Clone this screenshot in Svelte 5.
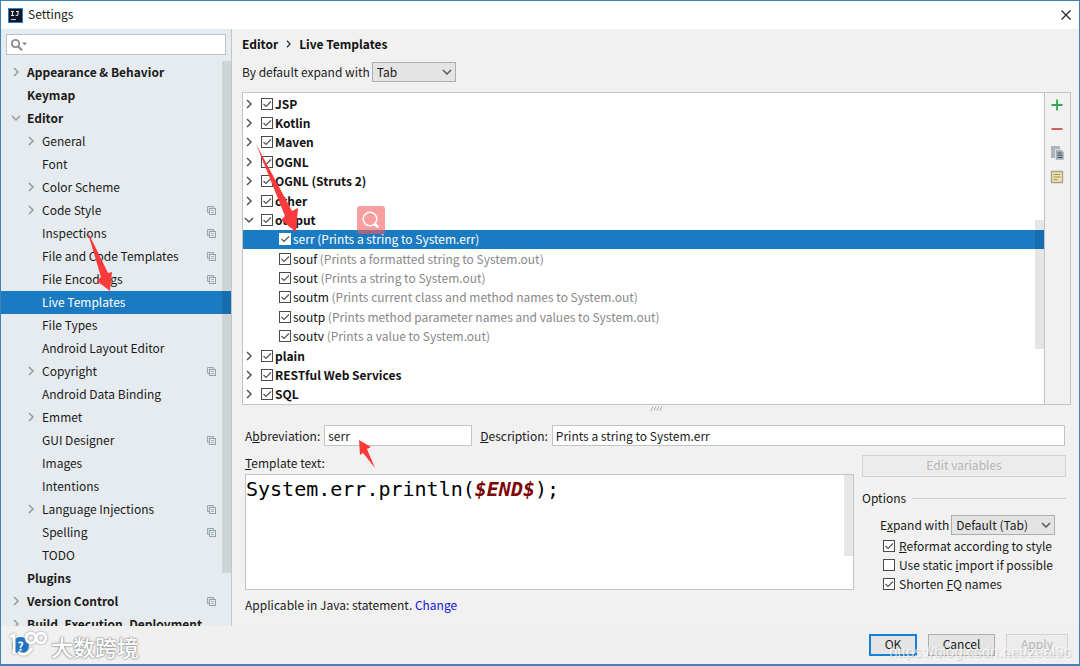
<script lang="ts">
  type Item = { label: string; level: number; arrow?: 'right' | 'down'; bold?: boolean; copy?: boolean; selected?: boolean };
  const settings: Item[] = [
    { label: 'Appearance & Behavior', level: 0, arrow: 'right', bold: true },
    { label: 'Keymap', level: 0, bold: true },
    { label: 'Editor', level: 0, arrow: 'down', bold: true },
    { label: 'General', level: 1, arrow: 'right' },
    { label: 'Font', level: 1 },
    { label: 'Color Scheme', level: 1, arrow: 'right' },
    { label: 'Code Style', level: 1, arrow: 'right', copy: true },
    { label: 'Inspections', level: 1, copy: true },
    { label: 'File and Code Templates', level: 1, copy: true },
    { label: 'File Encodings', level: 1, copy: true },
    { label: 'Live Templates', level: 1, selected: true },
    { label: 'File Types', level: 1 },
    { label: 'Android Layout Editor', level: 1 },
    { label: 'Copyright', level: 1, arrow: 'right', copy: true },
    { label: 'Android Data Binding', level: 1 },
    { label: 'Emmet', level: 1, arrow: 'right' },
    { label: 'GUI Designer', level: 1, copy: true },
    { label: 'Images', level: 1 },
    { label: 'Intentions', level: 1 },
    { label: 'Language Injections', level: 1, arrow: 'right', copy: true },
    { label: 'Spelling', level: 1, copy: true },
    { label: 'TODO', level: 1 },
    { label: 'Plugins', level: 0, bold: true },
    { label: 'Version Control', level: 0, arrow: 'right', bold: true, copy: true },
    { label: 'Build, Execution, Deployment', level: 0, arrow: 'right', bold: true }
  ];

  type Template = { name: string; note?: string; open?: boolean; selected?: boolean };
  const templates: Template[] = [
    { name: 'JSP' },
    { name: 'Kotlin' },
    { name: 'Maven' },
    { name: 'OGNL' },
    { name: 'OGNL (Struts 2)' },
    { name: 'other' },
    { name: 'output', open: true },
    { name: 'serr', note: '(Prints a string to System.err)', selected: true },
    { name: 'souf', note: '(Prints a formatted string to System.out)' },
    { name: 'sout', note: '(Prints a string to System.out)' },
    { name: 'soutm', note: '(Prints current class and method names to System.out)' },
    { name: 'soutp', note: '(Prints method parameter names and values to System.out)' },
    { name: 'soutv', note: '(Prints a value to System.out)' },
    { name: 'plain' },
    { name: 'RESTful Web Services' },
    { name: 'SQL' }
  ];
</script>

{#snippet chevron(dir: string)}
  <svg class="chevron" viewBox="0 0 10 10" width="10" height="10" aria-hidden="true">
    <path d={dir === 'down' ? 'M1 3 L5 7 L9 3' : 'M3 1 L7 5 L3 9'} fill="none" stroke="currentColor" stroke-width="1.5" />
  </svg>
{/snippet}

<div class="window">
  <header class="titlebar">
    <svg width="15" height="15" viewBox="0 0 15 15" aria-hidden="true">
      <rect width="15" height="15" fill="#2f7fd0" />
      <rect x="1" y="1" width="13" height="13" fill="#111722" />
      <path d="M3 3.5h3M4.5 3.5v4M3 7.5h3M8 3.5h3M10 3.5v3q0 1.2-2.4 1" fill="none" stroke="#e4e8ee" stroke-width="1.1" />
      <path d="M3 11.5h5" stroke="#b9c0c8" stroke-width="1.2" />
    </svg>
    <h1>Settings</h1>
    <button class="close" aria-label="Close">
      <svg width="10" height="10" viewBox="0 0 10 10"><path d="M.5 .5l9 9M9.5 .5l-9 9" stroke="#222" stroke-width="1.2" /></svg>
    </button>
  </header>

  <div class="body">
    <aside>
      <div class="search">
        <svg width="18" height="14" viewBox="0 0 18 14" aria-hidden="true">
          <circle cx="4.5" cy="5.5" r="3.7" fill="none" stroke="#8c8c8c" stroke-width="1.8" />
          <path d="M7 8.2l4 4" stroke="#8c8c8c" stroke-width="2.2" />
          <path d="M11 4.5h5l-2.5 3z" fill="#8c8c8c" />
        </svg>
        <input type="search" aria-label="Search settings" />
      </div>
      <nav>
        <ul>
          {#each settings as item}
            <li class:bold={item.bold} class:selected={item.selected} class:child={item.level === 1}>
              <span class="twist">{#if item.arrow}{@render chevron(item.arrow)}{/if}</span>
              <span class="name">{item.label}</span>
              {#if item.copy}
                <svg class="copy" width="9" height="9" viewBox="0 0 9 9" aria-hidden="true">
                  <path d="M2.5 6.5h-2v-6h6v2" fill="#d3e2ea" stroke="#8fa9b8" />
                  <rect x="2.5" y="2.5" width="6" height="6" fill="#e9edf0" stroke="#96a2aa" />
                  <path d="M4 4.5h3M4 6.5h3" stroke="#a5afb5" />
                </svg>
              {/if}
            </li>
          {/each}
        </ul>
        <span class="thumb"></span>
      </nav>
    </aside>

    <main>
      <h2>Editor
        <svg width="5" height="8" viewBox="0 0 5 8" aria-hidden="true"><path d="M1 .8l3 3.2l-3 3.2" fill="none" stroke="#333" stroke-width="1.3" /></svg>
        Live Templates</h2>
      <div class="expand">
        <label for="default-expand">By default expand with</label>
        <span class="select">
          <select id="default-expand"><option>Tab</option></select>
          {@render chevron('down')}
        </span>
      </div>

      <section class="templates">
        <ul>
          {#each templates as t}
            <li class:leaf={t.note} class:selected={t.selected}>
              {#if !t.note}<span class="twist">{@render chevron(t.open ? 'down' : 'right')}</span>{/if}
              <label><input type="checkbox" checked /><span>{t.name}{#if t.note}&nbsp;<i>{t.note}</i>{/if}</span></label>
            </li>
          {/each}
        </ul>
        <span class="list-thumb"></span>
        <div class="tools">
          <button aria-label="Add"><svg width="14" height="14" viewBox="0 0 14 14"><path d="M7 1.5v11M1.5 7h11" stroke="#2fa84f" stroke-width="1.8" /></svg></button>
          <button aria-label="Remove"><svg width="14" height="14" viewBox="0 0 14 14"><path d="M1.5 7h11" stroke="#cf5148" stroke-width="1.8" /></svg></button>
          <button aria-label="Duplicate"><svg width="14" height="14" viewBox="0 0 14 14"><path d="M1 0h9v3h-5v9h-4z" fill="#a9b4bc" /><path d="M5.5 3.5h6l2.5 2.5v8h-8.5z" fill="#a3afb8" stroke="#f1f1f1" stroke-width=".5" /><path d="M7.5 7h4M7.5 9.2h5M7.5 11.5h5" stroke="#3c464f" stroke-width=".9" /></svg></button>
          <button aria-label="Restore defaults"><svg width="14" height="14" viewBox="0 0 14 14"><path d="M1.5 1.5h11v11h-11z" fill="#efe3ac" stroke="#a9a38c" stroke-width="1.3" /><path d="M3.5 4.5h7M3.5 7h7M3.5 9.5h4" stroke="#968a60" stroke-width=".9" /></svg></button>
        </div>
      </section>

      <div class="grip"><svg width="14" height="5" viewBox="0 0 14 5" aria-hidden="true"><path d="M1 4.5l2-4M4 4.5l2-4M7 4.5l2-4M10 4.5l2-4" stroke="#aaa" /></svg></div>

      <div class="fields">
        <label for="abbr">A<u>b</u>breviation:</label>
        <input id="abbr" class="abbr" type="text" value="serr" />
        <label for="desc"><u>D</u>escription:</label>
        <input id="desc" class="desc" type="text" value="Prints a string to System.err" />
      </div>

      <div class="lower">
        <div class="left">
          <div id="template-label" class="template-label"><u>T</u>emplate text:</div>
          <div class="editor">
            <div class="code" contenteditable="true" role="textbox" tabindex="0" aria-multiline="true" aria-labelledby="template-label">System.err.println(<b>$END$</b>);</div>
            <span class="code-thumb"></span>
          </div>
          <p>Applicable in Java: statement. <a href="#change">Change</a></p>
        </div>
        <div class="right">
          <button class="btn wide" disabled>Edit variables</button>
          <fieldset>
            <legend>Options</legend>
            <div class="expand-with">
              <label for="expand">E<u>x</u>pand with</label>
              <span class="select">
                <select id="expand"><option>Default (Tab)</option></select>
                {@render chevron('down')}
              </span>
            </div>
            <label><input type="checkbox" checked /><span><u>R</u>eformat according to style</span></label>
            <label><input type="checkbox" /><span>Use static <u>i</u>mport if possible</span></label>
            <label><input type="checkbox" checked /><span>Shorten <u>F</u>Q names</span></label>
          </fieldset>
        </div>
      </div>
    </main>
  </div>

  <footer>
    <button class="help" aria-label="Help">?</button>
    <button class="btn primary">OK</button>
    <button class="btn">Cancel</button>
    <button class="btn apply" disabled>Apply</button>
  </footer>

  <svg class="arrows" width="480" height="480" viewBox="0 0 480 480" aria-hidden="true">
    <g fill="#fb3b3b">
      <path d="M256 144L292 211L298 208L296 232L281 220L285 216Z" />
      <path d="M87 230L108 273L112 272L110 291L97 281L101 277Z" />
      <path d="M375 468L363 453L360 455L359 440L371 447L367 449Z" />
    </g>
  </svg>

  <span class="lens">
    <svg width="28" height="28" viewBox="0 0 28 28" aria-hidden="true">
      <circle cx="13" cy="13" r="6.8" fill="none" stroke="#fff" stroke-width="1.5" />
      <path d="M18 18.5l2.5 2" stroke="#fff" stroke-width="2.6" stroke-linecap="round" />
    </svg>
  </span>

  <div class="brand">
    <svg width="42" height="30" viewBox="0 0 42 30" aria-hidden="true">
      <g fill="none" stroke="#fff" stroke-width="2.8">
        <path d="M1 6l4-2v19" />
        <circle cx="22" cy="7" r="4.8" /><circle cx="32" cy="7" r="4.8" />
        <path d="M9 21q8 6 14-4" />
      </g>
    </svg>
    <span>大数跨境</span>
  </div>
  <span class="url">https://blog.csdn.net/zeal9s</span>
</div>

<style>
  :global(body) { margin: 0; }
  * { box-sizing: border-box; }
  .window {
    position: relative; display: flex; flex-direction: column; min-height: 100vh;
    border: 1px solid #4083bc; border-bottom-width: 2px; background: #f1f1f1; color: #1a1a1a;
    font: 12px/16px "Noto Sans CJK SC", "Open Sans", sans-serif;
  }
  button, input, select { font: inherit; color: inherit; }
  ul { list-style: none; margin: 0; padding: 0; }
  .titlebar { display: flex; align-items: center; height: 28px; padding: 0 8px 0 7px; gap: 5px; background: #fff; }
  h1 { flex: 1; margin: 0; padding-bottom: 2px; font-size: 12px; font-weight: 400; }
  .close { display: grid; padding: 0; border: 0; background: none; }
  .body { display: flex; flex: 1; }
  aside { display: flex; flex-direction: column; width: 231px; flex: none; background: #e6ebef; border-right: 1px solid #c3c6c8; }
  .search { display: flex; align-items: center; height: 21px; margin: 5px 5px 6px 5px; padding-left: 4px; background: #fff; border: 1px solid #bfc3c6; }
  .search input { flex: 1; min-width: 0; border: 0; padding: 0; background: none; outline: 0; }
  nav { position: relative; flex: 1 0 564px; height: 564px; overflow: hidden; }
  nav li { display: flex; align-items: center; height: 23px; padding: 0 15px 1px 10px; }
  nav li.child { padding-left: 25px; }
  nav .twist { width: 16px; color: #9a9a9a; flex: none; display: flex; }
  .chevron { display: block; width: 10px; height: 10px; flex: none; }
  nav .name { flex: 1; white-space: nowrap; }
  .bold { font-weight: 700; }
  nav li.selected { background: #1a7bc2; color: #fff; }
  .thumb { position: absolute; top: 0; right: 0; width: 9px; height: 512px; background: rgba(0, 0, 0, .1); }
  main { flex: 1; min-width: 0; display: flex; flex-direction: column; padding: 7px 8px 0 10px; }
  h2 { display: flex; align-items: center; gap: 8px; margin: 0 0 10px; font-size: 12px; line-height: 16px; color: #111; }
  .expand, .expand-with, .fields { display: flex; align-items: center; }
  .expand { gap: 2px; height: 20px; }
  .select { position: relative; display: flex; height: 20px; }
  .select select { appearance: none; width: 84px; padding: 0 4px; border: 1px solid #adadad; border-radius: 0; background: #e4e4e4; }
  .select .chevron { position: absolute; right: 4px; top: 5px; color: #555; pointer-events: none; }
  .templates { position: relative; display: flex; height: 313px; margin-top: 10px; border: 1px solid #c4c4c4; background: #fff; }
  .templates ul { flex: 1; display: grid; grid-auto-rows: 1fr; padding-top: 1px; }
  .templates li { display: flex; align-items: center; padding-left: 1px; font-weight: 700; color: #111; }
  .templates li.leaf { padding-left: 36px; font-weight: 400; }
  .templates .twist { width: 17px; color: #555; }
  label { display: flex; align-items: center; white-space: pre; }
  i { font-style: normal; color: #888; }
  .templates li.selected, .templates li.selected i { color: #fff; }
  .templates li.selected { background: #1a7bc2; }
  input[type='checkbox'] {
    appearance: none; width: 12px; height: 12px; margin: 0 2px 0 0; border: 1px solid #4a4a4a; background: #fff; flex: none;
  }
  input[type='checkbox']:checked {
    background: #fff url("data:image/svg+xml,%3Csvg xmlns='http://www.w3.org/2000/svg' viewBox='0 0 10 10'%3E%3Cpath d='M1.5 5L4 7.5L9 2.5' fill='none' stroke='%23555' stroke-width='1.2'/%3E%3C/svg%3E") center / 10px 10px;
  }
  .selected input[type='checkbox'] { border-color: #fff; }
  .list-thumb { position: absolute; top: 127px; right: 26px; width: 9px; height: 129px; background: rgba(0, 0, 0, .1); }
  .tools { width: 26px; padding: 5px 1px 0 0; border-left: 1px solid #c4c4c4; background: #f1f1f1; display: flex; flex-direction: column; align-items: center; gap: 10px; }
  .tools button { display: grid; padding: 0; border: 0; background: none; }
  .grip { display: flex; justify-content: center; padding-top: 1px; height: 20px; }
  .fields { padding: 0 6px 0 3px; }
  .fields input { height: 21px; padding: 0 3px; border: 1px solid #c4c4c4; background: #fff; min-width: 0; }
  .fields .abbr { width: 148px; margin: 0 8px 0 4px; }
  .fields .desc { flex: 1; margin-left: 4px; }
  .lower { display: flex; gap: 8px; padding: 9px 5px 0 3px; }
  .left { flex: 1; min-width: 0; }
  .template-label { height: 19px; }
  .editor { position: relative; height: 116px; border: 1px solid #c4c4c4; background: #fff; }
  .code { height: 114px; padding: 2px 0 0; color: #000; font: 20px/24px "DejaVu Sans Mono", monospace; outline: 0; }
  .code b { color: #7d0606; font-style: italic; }
  .code-thumb { position: absolute; top: 0; right: 0; width: 9px; height: 81px; background: #e6e6e6; }
  p { margin: 7px 0 0; }
  a { color: #1414d2; text-decoration: none; }
  .right { width: 204px; flex: none; }
  .btn { width: 67px; height: 22px; padding: 0 0 2px; border: 1px solid #adadad; background: #e4e4e4; }
  .btn:disabled { color: #b5b5b5; border-color: #d2d2d2; background: #ececec; }
  .wide { width: 100%; display: block; }
  fieldset { border: 0; margin: 13px 0 0; padding: 0; }
  legend { display: flex; align-items: center; width: 100%; padding: 0; margin-bottom: 9px; gap: 6px; }
  legend::after { content: ''; flex: 1; height: 1px; background: #cfcfcf; }
  .expand-with { gap: 2px; padding-left: 18px; margin-bottom: 1px; }
  .expand-with select { width: 104px; }
  fieldset > label { height: 19px; padding-left: 21px; }
  fieldset > label input[type='checkbox'] { margin-right: 4px; }
  footer { display: flex; align-items: center; gap: 11px; height: 38px; padding: 0 11px; background: #f0f0f0; }
  .primary { width: 48px; border: 2px solid #1580d6; }
  .apply { width: 62px; }
  .help { margin-right: auto; width: 17px; height: 17px; padding: 0; border: 0; border-radius: 50%; background: #1d74c4; color: #fff; font-weight: 700; line-height: 17px; }
  .arrows { position: absolute; left: -1px; top: -1px; pointer-events: none; }
  .lens { position: absolute; left: 356px; top: 205px; width: 28px; height: 28px; border-radius: 3px; background: rgba(244, 94, 94, .6); }
  .brand { position: absolute; left: 8px; bottom: 3px; display: flex; align-items: center; pointer-events: none; color: #fff; font: 500 22px/30px "Noto Sans CJK SC", sans-serif; text-shadow: 0 0 2px #777, 0 0 2px #999; }
  .brand svg { filter: drop-shadow(0 0 1px #888); }
  .url { position: absolute; right: 8px; bottom: 3px; color: rgba(255, 255, 255, .7); font: 15px/18px "Liberation Sans", sans-serif; text-shadow: 1px 1px 1px rgba(0, 0, 0, .15); pointer-events: none; }
</style>
